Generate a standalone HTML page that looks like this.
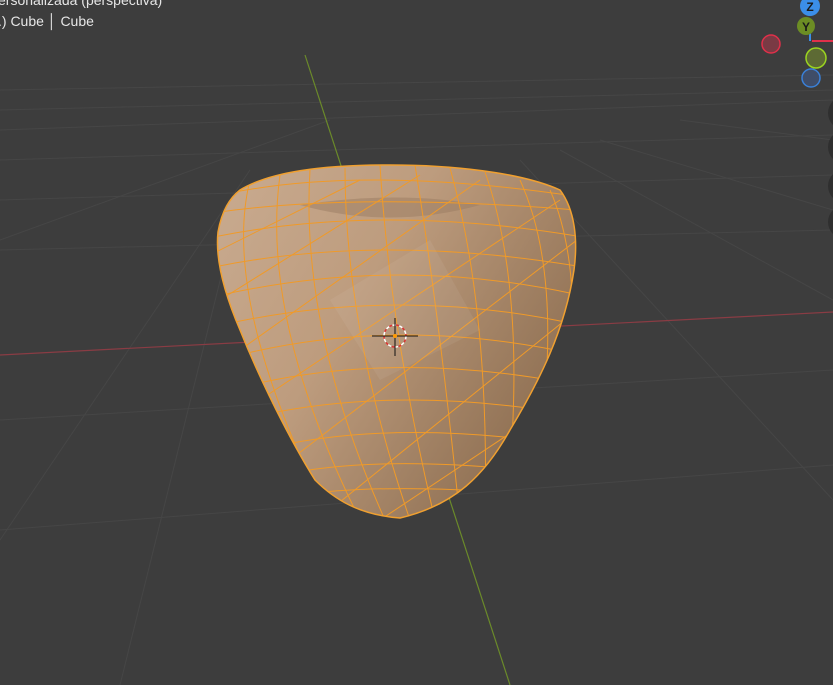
<!DOCTYPE html>
<html><head><style>
html,body{margin:0;padding:0;background:#3d3d3d;width:833px;height:685px;overflow:hidden}
.t{position:absolute;left:0;color:#e6e6e6;font:14px "Liberation Sans",sans-serif}
</style></head><body>
<svg width="833" height="685" style="position:absolute;left:0;top:0">
<defs>
<linearGradient id="g" x1="0" y1="0" x2="1" y2="0.6">
<stop offset="0" stop-color="#c9ab90"/><stop offset="0.45" stop-color="#bd9c7e"/><stop offset="1" stop-color="#8e6f52"/>
</linearGradient>
<clipPath id="c"><path id="b" d="M240,190 C270,172 320,165 390,165 C450,165 520,172 560,190 C575,210 578,240 574,270 C565,330 540,380 510,430 C485,475 455,505 400,518 C360,515 335,500 315,480 C290,440 260,380 240,330 C225,295 215,260 218,232 C222,210 230,198 240,190Z"/></clipPath>
</defs>
<g stroke="#464646" stroke-width="1" fill="none">
<path d="M0,130 L833,100 M0,160 L833,135 M0,200 L833,175 M0,250 L833,230 M0,420 L833,370 M0,530 L833,465 M0,90 L833,75 M0,110 L833,90"/>
<path d="M0,240 L330,120 M0,540 L250,170 M120,685 L240,200 M560,150 L833,300 M600,140 L833,210 M520,160 L833,500 M680,120 L833,140"/>
</g>
<path d="M0,355 L833,312" stroke="#8a3c44" stroke-width="1.2"/>
<path d="M305,55 L510,685" stroke="#6b8a2a" stroke-width="1.2"/>
<use href="#b" fill="url(#g)"/>
<path d="M300,205 Q390,230 480,205 Q400,190 300,205Z" fill="#9a7c62" opacity="0.5"/>
<g clip-path="url(#c)" stroke="#f09a28" stroke-width="1" fill="none">
<path d="M200,200 Q350,160 600,200 M200,215 Q350,190 600,212 M200,240 Q380,200 600,240 M200,270 Q380,230 600,270 M200,300 Q400,250 600,300 M200,330 Q400,280 600,330 M220,360 Q400,310 600,360 M230,390 Q400,345 600,390 M240,420 Q400,380 600,420 M260,450 Q400,415 600,450 M280,475 Q400,450 600,480 M300,495 Q400,480 600,500"/>
<path d="M250,180 Q220,300 330,520 M280,175 Q260,320 360,520 M310,170 Q300,330 385,520 M345,168 Q345,330 410,520 M380,165 Q390,330 435,520 M415,165 Q440,320 460,520 M450,168 Q490,310 485,520 M485,172 Q530,300 505,520 M520,180 Q570,290 530,500 M550,190 Q590,280 560,460"/>
<path d="M200,260 L360,180 M220,300 L420,175 M240,350 L480,180 M260,400 L560,200 M290,460 L590,230 M330,510 L590,300 M380,520 L590,380"/>
</g>
<use href="#b" fill="none" stroke="#f0a030" stroke-width="1.5"/>
<path d="M330,300 L430,240 L480,330 L380,380Z" fill="#fff" opacity="0.06"/>
<circle cx="395" cy="336" r="11" fill="none" stroke="#fff" stroke-width="1.5" stroke-dasharray="4 3"/>
<circle cx="395" cy="336" r="11" fill="none" stroke="#d33" stroke-width="1.5" stroke-dasharray="3 4" stroke-dashoffset="3.5"/>
<path d="M372,336 L418,336 M395,318 L395,356" stroke="#111" stroke-width="1"/>
<circle cx="395" cy="336" r="2" fill="#f90"/>
<circle cx="771" cy="44" r="9" fill="#7a3a44" stroke="#e0304a" stroke-width="1.5"/>
<path d="M810,41 L810,28" stroke="#3b8ee8" stroke-width="2"/>
<path d="M812,41 L833,41" stroke="#e0304a" stroke-width="2"/>
<circle cx="810" cy="6" r="10" fill="#3b8ee8"/>
<text x="810" y="11" font-family="Liberation Sans" font-size="12" font-weight="bold" fill="#1a1a1a" text-anchor="middle">Z</text>
<circle cx="806" cy="26" r="9" fill="#6c8d24"/>
<text x="806" y="31" font-family="Liberation Sans" font-size="12" font-weight="bold" fill="#1a1a1a" text-anchor="middle">Y</text>
<circle cx="816" cy="58" r="10" fill="#5d6a34" stroke="#9bd420" stroke-width="1.5"/>
<circle cx="811" cy="78" r="9" fill="#3f4d68" stroke="#3a80d8" stroke-width="1.5"/>
<circle cx="845" cy="113" r="17" fill="#2f2f2f"/>
<circle cx="845" cy="147" r="17" fill="#2f2f2f"/>
<circle cx="845" cy="186" r="17" fill="#2f2f2f"/>
<circle cx="845" cy="222" r="17" fill="#2f2f2f"/>
</svg>
<div class="t" style="top:-8px;left:-2px">ersonalizada (perspectiva)</div>
<div class="t" style="top:13px;left:-2px">.) Cube │ Cube</div>
</body></html>
